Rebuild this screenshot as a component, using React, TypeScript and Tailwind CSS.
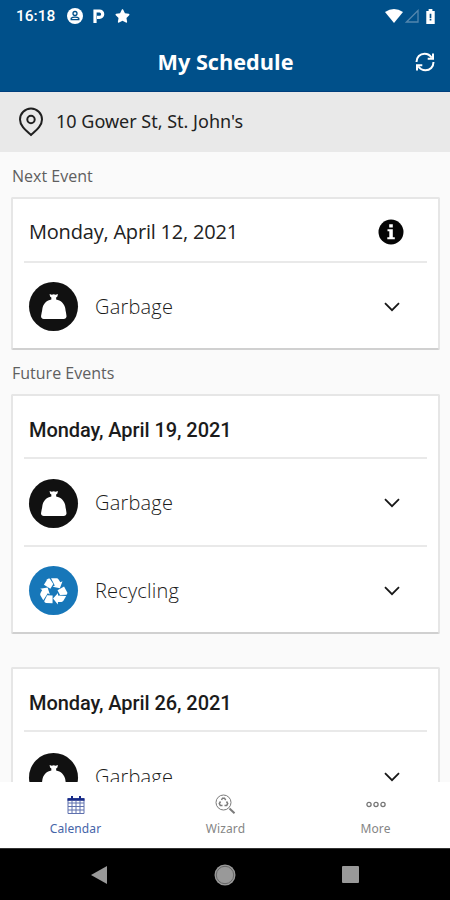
import { FC, ReactNode } from 'react';
import { FaStar } from 'react-icons/fa';

const GarbageIcon: FC = () => (
  <span className="block h-[49px] w-[49px] shrink-0 rounded-full bg-[#111111]">
    <svg viewBox="0 0 50 50" className="h-full w-full" fill="#ffffff">
      <path d="M21 12.300l2.200.8 2-.5 2 .5 2.300-.8-.5 2.500-1.300 1v2c4.800.9 8 4 9.100 8.200.5 2 .4 3 .9 4.900l.6 4.100c0 1.700-1.300 2.700-3 2.700H15.100c-1.800 0-3-1.100-2.800-2.900l.7-3.900c.6-1.900.4-2.900.9-4.900 1.100-4.200 4.200-7.300 8.900-8.200v-2l-1.300-1z" />
    </svg>
  </span>
);

const arm = (
  <>
    <path d="M-9.800-6.800L-6.300-12.400Q-5.500-13.600-3.900-13.200L-.2-7.600-3.200-2.900z" />
    <path d="M-2.500-13.500H3.200Q4.500-13.500 5.200-12.300L7-9.300 9.200-10.400 6.500-3.200-.9-4.800 1.300-6z" />
  </>
);

const RecyclingIcon: FC = () => (
  <span className="block h-[49px] w-[49px] shrink-0 rounded-full bg-[#1777b9]">
    <svg viewBox="-25 -26 50 50" className="h-full w-full" fill="#ffffff">
      <g>{arm}</g>
      <g transform="rotate(120)">{arm}</g>
      <g transform="rotate(240)">{arm}</g>
    </svg>
  </span>
);

const Chevron: FC = () => (
  <svg viewBox="0 0 16 10" className="mr-[27px] h-[10px] w-4" fill="none" stroke="#181818" strokeWidth={1.8}>
    <path d="M1 1.200l7 7 7-7" />
  </svg>
);

const InfoIcon: FC = () => (
  <svg viewBox="0 0 26 26" className="mr-[23px] h-[26px] w-[26px]">
    <circle cx="13" cy="13" r="12.500" fill="#050505" />
    <path d="M11.200 5.200h3.600v3.300h-3.600zM9.500 10.300h5.300v8h2v2H9.300v-2h2v-6H9.500z" fill="#ffffff" />
  </svg>
);

const EventRow: FC<{ type: 'Garbage' | 'Recycling' }> = ({ type }) => (
  <div className="flex h-full items-center pl-[5px] pt-[2px]">
    {type === 'Garbage' ? <GarbageIcon /> : <RecyclingIcon />}
    <span className="ml-[17px] flex-1 text-[20px] font-light leading-7 tracking-[0.2px] text-[#1b1b1b]">{type}</span>
    <Chevron />
  </div>
);

const Card: FC<{ children: ReactNode }> = ({ children }) => (
  <section className="ml-[11px] mr-[10px] rounded-[2px] border-2 border-[#e6e6e6] border-b-[#d0d0d0] bg-white pl-[11px] pr-[11px]">
    {children}
  </section>
);

const DateHeading: FC<{ children: ReactNode }> = ({ children }) => (
  <h2 className="flex h-[63px] items-center border-b-2 border-[#e9e9e9] pl-[5px] pt-[6px] font-['Roboto',sans-serif] text-[20px] font-medium tracking-[-0.07px] text-[#1b1b1b]">
    {children}
  </h2>
);

const StatusBar: FC = () => (
  <div className="flex h-8 items-center justify-between pl-4 pr-[15px] text-white">
    <div className="flex items-center">
      <span className="w-[51px] pt-px font-['Roboto',sans-serif] text-[15.5px] font-medium leading-none">16:18</span>
      <svg viewBox="0 0 16 16" className="h-4 w-4">
        <circle cx="8" cy="8" r="8" fill="#ffffff" />
        <circle cx="8" cy="5.500" r="2" fill="none" stroke="#00508a" strokeWidth="1.300" />
        <path d="M4.200 11.600V10.300C5.700 8.600 10.300 8.600 11.800 10.300v1.300z" fill="none" stroke="#00508a" strokeWidth="1.300" />
      </svg>
      <svg viewBox="0 0 12 14" className="ml-[10px] h-[14px] w-3" fill="none" stroke="#ffffff" strokeWidth="3.200">
        <path d="M2 14V2h4.500a3 3 0 0 1 0 6.400H4" />
      </svg>
      <FaStar className="ml-[10px] h-[14px] w-[15px]" />
    </div>
    <div className="flex items-center">
      <svg viewBox="0 0 18 14" className="h-[14px] w-[18px]" fill="#ffffff">
        <path d="M0 3Q9-3 18 3L9 14z" />
      </svg>
      <svg viewBox="0 0 14 14" className="ml-[2px] h-[14px] w-[14px]" fill="none" stroke="#5386ae" strokeWidth="1.300">
        <path d="M13 1.500V13H1.500z" />
      </svg>
      <svg viewBox="0 0 9 16" className="ml-[7px] h-[15px] w-[9px]">
        <path d="M2.500 0h4v2H9v14H0V2h2.500z" fill="#ffffff" />
        <path d="M3.600 5h1.800v4.500H3.600zM3.600 10.500h1.800v1.800H3.600z" fill="#00508a" />
      </svg>
    </div>
  </div>
);

const RefreshIcon: FC = () => (
  <svg viewBox="0 0 20 20" className="h-5 w-5" fill="none" stroke="#ffffff" strokeWidth="2">
    <path d="M1.500 10C1.500 5 5 1.700 9.500 1.700c3 0 5.500 1.300 7.200 4M18.500 10c0 5-3.500 8.300-8 8.300-3 0-5.500-1.300-7.200-4" />
    <path d="M18 1.500v5.300h-5.300M2 18.500v-5.300h5.300" />
  </svg>
);

const CalendarIcon: FC = () => (
  <svg viewBox="0 0 18 18" className="h-[18px] w-[18px]" fill="none" stroke="#5f71ae" strokeWidth="1">
    <path d="M1 2.500h16v15H1zM1 7h16M1 10.500h16M1 14h16M5 5v12M9 5v12M13 5v12" />
    <path d="M.5 3.500h17" stroke="#182b88" strokeWidth="2.600" />
    <path d="M5 0v3M13 0v3" stroke="#182b88" strokeWidth="2" />
  </svg>
);

const WizardIcon: FC = () => (
  <svg viewBox="0 0 21 21" className="h-[21px] w-[21px]" fill="none" stroke="#7b7b7b" strokeWidth="1">
    <circle cx="8.500" cy="8.500" r="7.500" />
    <path d="M14.500 14.500l5 4.800" strokeWidth="2" />
    <path d="M6.500 6l1-1.800h2l1.200 2M11.500 7.500l1.200 2-1 1.900H9.500M7.500 11.400H5.300l-1-1.900 1.200-2" strokeWidth="1.500" />
  </svg>
);

const MoreIcon: FC = () => (
  <svg viewBox="0 0 20 7" className="h-[7px] w-5" fill="none" stroke="#777777" strokeWidth="1.300">
    <circle cx="3" cy="3.500" r="2.100" />
    <circle cx="10" cy="3.500" r="2.100" />
    <circle cx="17" cy="3.500" r="2.100" />
  </svg>
);

const tabs = [
  { label: 'Calendar', icon: <CalendarIcon />, active: true },
  { label: 'Wizard', icon: <WizardIcon />, active: false },
  { label: 'More', icon: <MoreIcon />, active: false },
];

export default function App() {
  return (
    <div className="flex h-[900px] w-[450px] flex-col overflow-hidden bg-[#fafafa] font-['Open_Sans',sans-serif]">
      <header className="h-[92px] shrink-0 border-b border-[#003f7d] bg-[#00508a]">
        <StatusBar />
        <div className="grid h-[59px] grid-cols-[1fr_auto_1fr] items-center pr-[15px]">
          <h1 className="col-start-2 pl-[16px] text-[21.700px] font-bold leading-8 text-white">My Schedule</h1>
          <button className="justify-self-end" aria-label="Refresh schedule">
            <RefreshIcon />
          </button>
        </div>
      </header>

      <div className="flex h-[60px] shrink-0 items-center bg-[#e9e9e9] pl-[18px]">
        <svg viewBox="0 0 26 30" className="h-[30px] w-[26px]" fill="none" stroke="#202020" strokeWidth="2">
          <path d="M24 12.500C24 19 18 23.500 13 28 8 23.500 2 19 2 12.500a11 11 0 0 1 22 0z" />
          <circle cx="13" cy="12.500" r="3.700" />
        </svg>
        <span className="ml-[12px] pb-px font-['Noto_Sans',sans-serif] text-[18px] text-[#222222]">10 Gower St, St. John's</span>
      </div>

      <main className="min-h-0 flex-1 overflow-hidden">
        <p className="h-[45px] pl-[12px] pt-[12px] text-[16px] leading-6 text-[#5f5f5f]">Next Event</p>
        <Card>
          <div className="flex h-[64px] items-center justify-between border-b-2 border-[#e9e9e9] pl-[5px] pt-[3px]">
            <h2 className="text-[20px] leading-7 tracking-[-0.2px] text-[#222222]">Monday, April 12, 2021</h2>
            <InfoIcon />
          </div>
          <div className="h-[85px]">
            <EventRow type="Garbage" />
          </div>
        </Card>

        <p className="h-[44px] pl-[12px] pt-[11px] text-[16px] leading-6 text-[#5f5f5f]">Future Events</p>
        <Card>
          <DateHeading>Monday, April 19, 2021</DateHeading>
          <div className="h-[88px] border-b-2 border-[#e9e9e9]">
            <EventRow type="Garbage" />
          </div>
          <div className="h-[85px]">
            <EventRow type="Recycling" />
          </div>
        </Card>
        <div className="h-[33px]" />
        <Card>
          <DateHeading>Monday, April 26, 2021</DateHeading>
          <div className="h-[88px]">
            <EventRow type="Garbage" />
          </div>
        </Card>
      </main>

      <nav className="grid h-[66px] shrink-0 grid-cols-3 bg-white">
        {tabs.map((tab) => (
          <button
            key={tab.label}
            className={`flex flex-col items-center pl-px font-['Noto_Sans',sans-serif] text-[12px] ${
              tab.active ? 'text-[#4564a8]' : 'text-[#858585]'
            }`}
          >
            <span className="mt-3 flex h-[21px] items-center justify-center">{tab.icon}</span>
            <span className="mt-[5px] leading-[18px] tracking-[0.1px]">{tab.label}</span>
          </button>
        ))}
      </nav>

      <div className="grid h-[52px] shrink-0 grid-cols-3 items-center justify-items-center border-t border-[#333333] bg-black">
        <svg viewBox="0 0 16 18" className="ml-12 h-[18px] w-4" fill="#999999">
          <path d="M16 0v18L0 9z" />
        </svg>
        <svg viewBox="0 0 22 22" className="h-[22px] w-[22px]">
          <circle cx="11" cy="11" r="10.500" fill="#999999" />
          <circle cx="11" cy="11" r="8.700" fill="none" stroke="#666666" strokeWidth="1" />
        </svg>
        <span className="mr-[50px] h-[17px] w-[17px] rounded-[1px] bg-[#999999]" />
      </div>
    </div>
  );
}
